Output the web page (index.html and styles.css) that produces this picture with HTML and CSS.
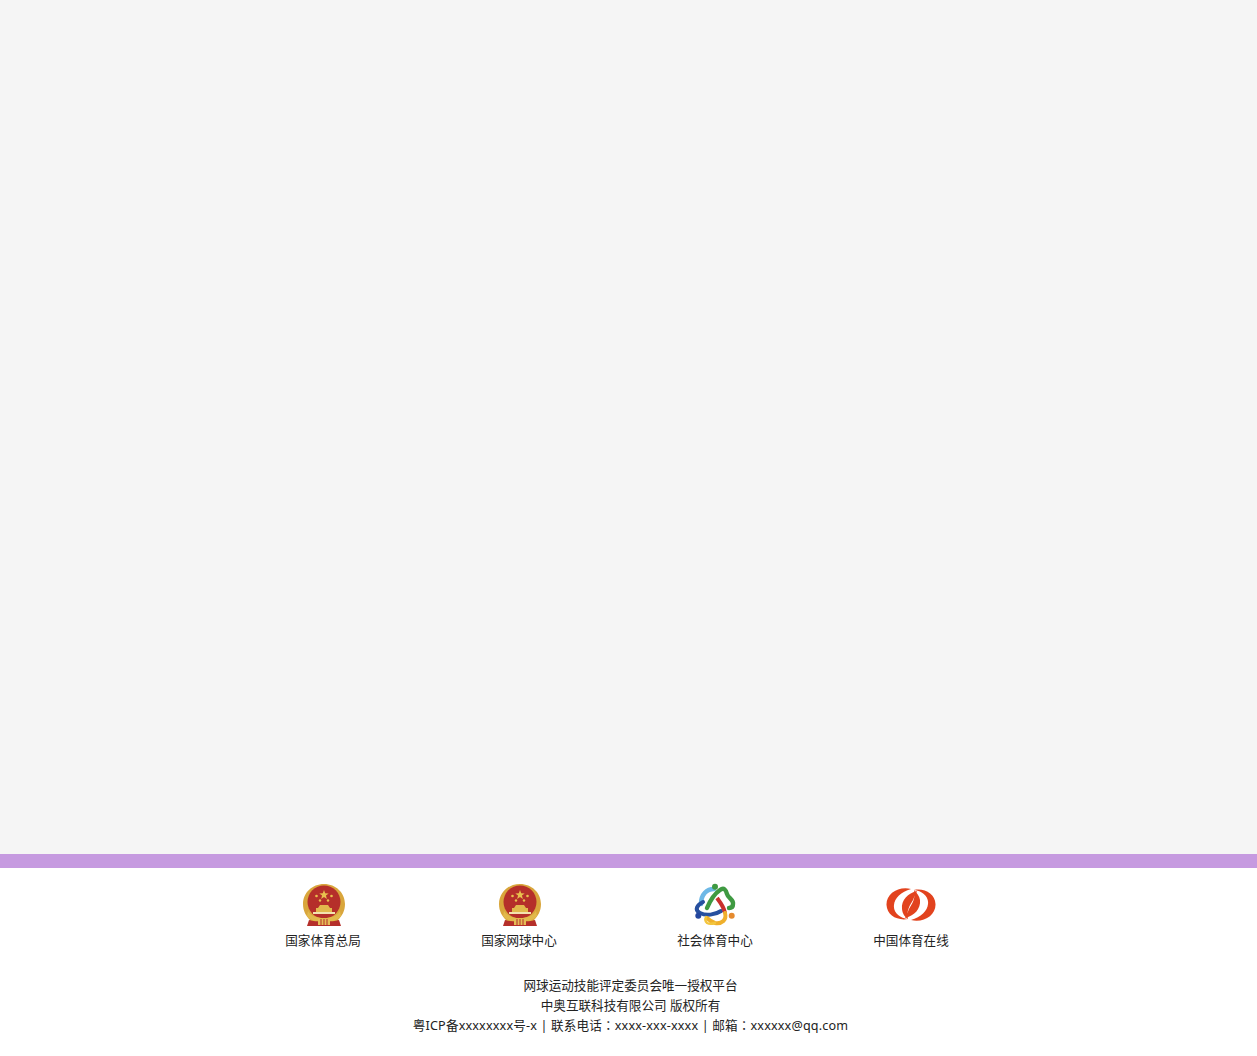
FILE: index.html
```html
<!DOCTYPE html>
<html lang="zh-CN">
<head>
<meta charset="utf-8">
<title>网球运动技能评定委员会唯一授权平台</title>
<link rel="stylesheet" href="styles.css">
</head>
<body>
<main class="content"></main>
<footer class="footer">
  <nav class="links">
    <a class="link">
      <svg class="icon" viewBox="-2 0 50 44"><use href="#emblem"/></svg>
      <span>国家体育总局</span>
    </a>
    <a class="link">
      <svg class="icon" viewBox="-2 0 50 44"><use href="#emblem"/></svg>
      <span>国家网球中心</span>
    </a>
    <a class="link">
      <svg class="icon" viewBox="-3 0 50 44" fill="none" stroke-linecap="round">
        <path d="M21 6C14 6 8 11 8 21" stroke="#6db8e6" stroke-width="4.600"/>
        <path d="M10 19C4 22 1 27 7 30C13 33 22 32 28 28" stroke="#27509f" stroke-width="4"/>
        <path d="M14 25C17 18 21 11 27 7C31 4 33 7 34 11C35 15 41 17 40 21C40 24 38 25 36 25" stroke="#3f9a42" stroke-width="4.400"/>
        <path d="M24 15C27 19 31 24 32 30" stroke="#c9302c" stroke-width="4" stroke-linecap="butt"/>
        <path d="M32 30C34 37 29 41 22 40C18 39 16 37 14 35" stroke="#efb02c" stroke-width="4"/>
        <path d="M13 34C12 36 12 38 14 40C16 41 19 41 22 40" stroke="#f3c63e" stroke-width="2.400"/>
        <circle cx="22" cy="3.700" r="3" fill="#3f9a42"/>
        <circle cx="5.300" cy="32.700" r="3" fill="#24479e"/>
        <circle cx="38.700" cy="32.700" r="3" fill="#e58a2e"/>
      </svg>
      <span>社会体育中心</span>
    </a>
    <a class="link">
      <svg class="icon" viewBox="0 0 50 44">
        <g fill="#e2431e">
          <path d="M25 6C12 3 0 11 .5 22C1 32 11 38 22 36C14 35 7 30 8 22C8.500 15 15 9 25 6Z"/>
          <path d="M25 37C38 40 50 32 49.500 21C49 11 39 5 28 7C36 8 43 13 42 21C41.500 28 35 34 25 37Z"/>
          <path d="M31 8C22 10 15 17 16 26C16.500 31 19 34 22 36C20 28 24 22 27 17C28 14 30 11 31 8Z"/>
          <path d="M19 35C28 33 35 26 34 17C33.500 13 31 10 28 7C30 15 26 21 23 26C22 29 20 32 19 35Z"/>
        </g>
      </svg>
      <span>中国体育在线</span>
    </a>
  </nav>
  <div class="info">
    <p>网球运动技能评定委员会唯一授权平台</p>
    <p>中奥互联科技有限公司 版权所有</p>
    <p class="contact">粤ICP备xxxxxxxx号-x | 联系电话<span class="colon" lang="zh-TW">：</span>xxxx-xxx-xxxx | 邮箱<span class="colon" lang="zh-TW">：</span>xxxxxx@qq.com</p>
  </div>
</footer>
<svg class="defs" width="0" height="0">
  <defs>
    <g id="emblem">
      <path d="M24 1C12 1 3 10 3 21C3 28 6 33 10 37L9 43H39L38 37C42 33 45 28 45 21C45 10 36 1 24 1Z" fill="#d9a63c"/>
      <circle cx="24" cy="19" r="16.500" fill="#b52f2a"/>
      <path d="M24 7l1.200 3.300 3.500.1-2.800 2.100 1 3.400-2.900-2-2.900 2 1-3.400-2.800-2.100 3.500-.1Z" fill="#e8c14e"/>
      <circle cx="16.500" cy="13" r="1.300" fill="#e8c14e"/>
      <circle cx="31.500" cy="13" r="1.300" fill="#e8c14e"/>
      <circle cx="20" cy="17.500" r="1.200" fill="#e8c14e"/>
      <circle cx="28" cy="17.500" r="1.200" fill="#e8c14e"/>
      <path d="M20 22H28L30 25H32V29H16V25H18Z" fill="#e2b94c"/>
      <rect x="13" y="29" width="22" height="2" fill="#f3e2ae"/>
      <path d="M8 28C11 33 17 35 24 35C31 35 37 33 40 28L41 33C37 38 31 39 24 39C17 39 11 38 7 33Z" fill="#e2b94c"/>
      <path d="M9 37C15 39 33 39 39 37L41 43H7Z" fill="#b52f2a"/>
      <rect x="18" y="36" width="12" height="6" fill="#e5bd57"/>
      <path d="M21 36V42M24 36V42M27 36V42" stroke="#b52f2a" stroke-width="1"/>
    </g>
  </defs>
</svg>
</body>
</html>
```

FILE: styles.css
```css
* {
  box-sizing: border-box;
}

html,
body {
  margin: 0;
  padding: 0;
}

body {
  background: #fff;
  color: #222;
  font-family: "Noto Sans", "Noto Sans CJK SC", sans-serif;
  font-size: 12.6px;
  font-weight: 400;
}

.content {
  height: 854px;
  background: #f5f5f5;
}

.footer {
  height: 202px;
  border-top: 14px solid #c69ae0;
  overflow: hidden;
}

.links {
  display: flex;
  padding: 15px 0 0 225px;
}

.link {
  width: 196px;
  display: flex;
  flex-direction: column;
  align-items: center;
  gap: 4px;
}

.link span {
  line-height: 20px;
  white-space: nowrap;
}

.icon {
  display: block;
  width: 50px;
  height: 44px;
  filter: blur(0.3px);
}

.info {
  margin-top: 25px;
  padding-left: 4px;
  text-align: center;
  line-height: 20px;
}

.info p {
  margin: 0;
}

.contact {
  letter-spacing: 0.16px;
}

.colon {
  font-family: "Noto Sans CJK TC", sans-serif;
  line-height: 1;
}

.defs {
  position: absolute;
}
```
